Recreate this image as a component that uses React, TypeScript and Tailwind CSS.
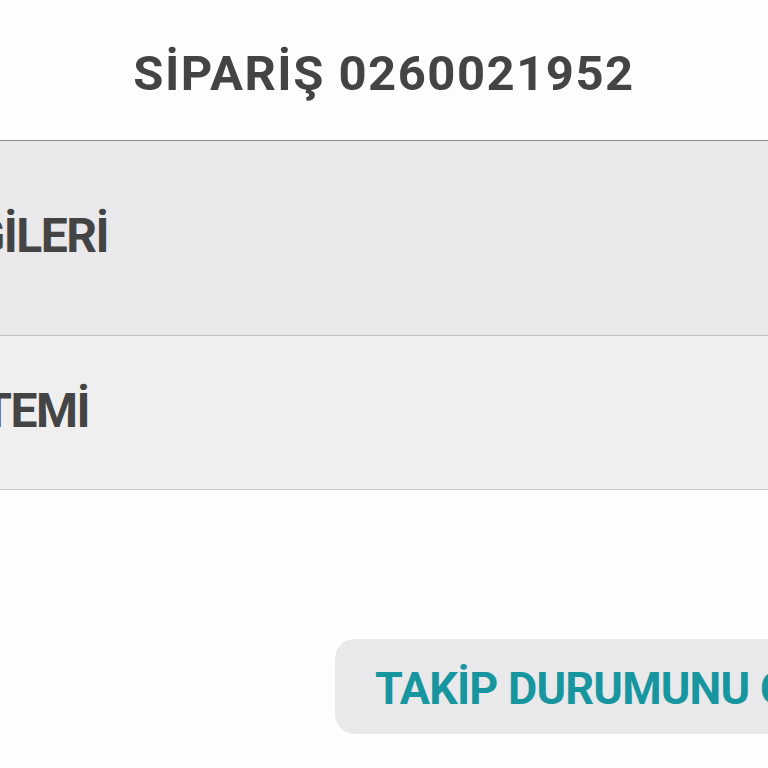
export default function App() {
  return (
    <div className="w-[768px] h-[768px] overflow-hidden bg-[#fefefe] flex flex-col" style={{ fontFamily: 'Roboto, "Noto Sans", sans-serif' }}>
      <div className="h-[141px] bg-[#fdfdfd] flex items-center justify-center border-b border-[#8f8f8f] shrink-0">
        <div className="text-[49px] font-bold text-[#444444] whitespace-nowrap leading-none pt-[6px] tracking-[1.5px]">SİPARİŞ 0260021952</div>
      </div>
      <div className="h-[195px] bg-[#e9e9eb] border-b border-[#c2c2c2] flex items-center pb-[4px] shrink-0">
        <div className="w-[108px] flex justify-end shrink-0">
          <div className="text-[48px] font-bold text-[#444444] whitespace-nowrap leading-none shrink-0 tracking-[-1.5px]">KARGO BİLGİLERİ</div>
        </div>
      </div>
      <div className="h-[154px] bg-[#efefef] border-b border-[#c8c8c8] flex items-center pb-[4px] shrink-0">
        <div className="w-[89px] flex justify-end shrink-0">
          <div className="text-[48px] font-bold text-[#444444] whitespace-nowrap leading-none shrink-0 tracking-[-1.5px]">ÖDEME SİSTEMİ</div>
        </div>
      </div>
      <div className="pt-[149px] pl-[335px] flex">
        <div className="h-[95px] bg-[#e9e9eb] rounded-[20px] pl-[40px] pr-[40px] flex items-center shrink-0">
          <span className="text-[45px] font-bold text-[#17969f] whitespace-nowrap leading-none pt-[3px] tracking-[-0.8px]">TAKİP DURUMUNU GÖR</span>
        </div>
      </div>
    </div>
  );
}
